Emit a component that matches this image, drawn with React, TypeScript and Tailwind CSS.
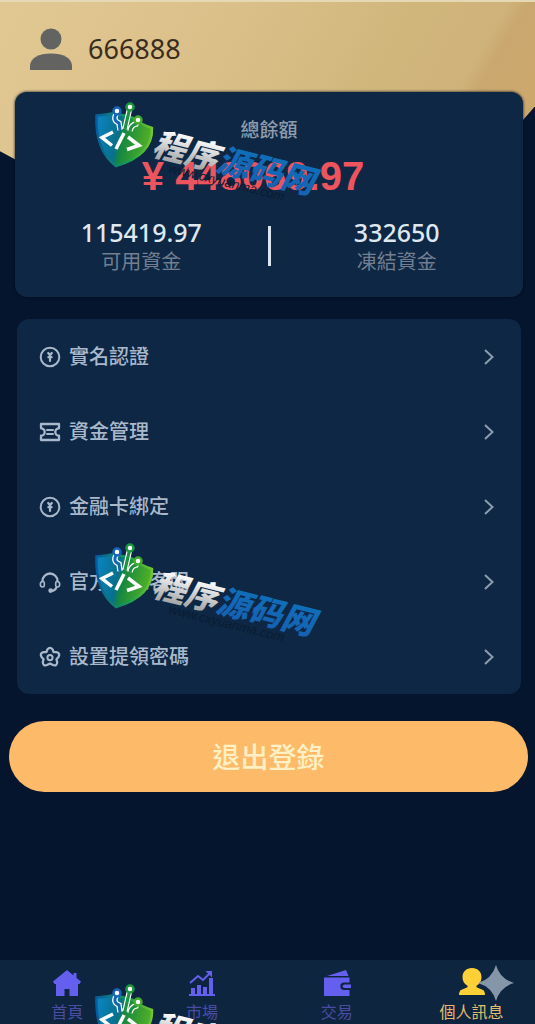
import type { ReactNode } from "react";

type IconProps = { className?: string };

function UserIcon({ className }: IconProps) {
  return (
    <svg viewBox="0 0 42 42" className={className} fill="currentColor" aria-hidden="true">
      <circle cx="21" cy="11" r="10.5" />
      <path d="M0 42v-4c0-8 9-12.5 21-12.5S42 30 42 38v4z" />
    </svg>
  );
}

function Outline({ children }: { children: ReactNode }) {
  return (
    <svg
      viewBox="0 0 22 22"
      className="h-[22px] w-[22px] shrink-0"
      fill="none"
      stroke="currentColor"
      strokeWidth="2"
      strokeLinecap="round"
      strokeLinejoin="round"
      aria-hidden="true"
    >
      {children}
    </svg>
  );
}

function CoinIcon() {
  return (
    <Outline>
      <circle cx="11" cy="11" r="9.3" />
      <path d="M9.2 7l1.8 2.2L12.8 7M11 9.2V15M9.4 11.2h3.200" strokeWidth="2.2" />
    </Outline>
  );
}

function TicketIcon() {
  return (
    <Outline>
      <path d="M2 3h18v4.300a3.700 3.700 0 0 0 0 7.400V19H2v-4.300a3.700 3.700 0 0 0 0-7.400z" strokeWidth="2.3" />
      <path d="M8 9h6M8 13h6" />
    </Outline>
  );
}

function HeadsetIcon() {
  return (
    <Outline>
      <path d="M3.500 10a7.500 7.500 0 0 1 15 0" strokeWidth="2.3" />
      <path
        d="M3.800 10.500c-1.800 0-2.500 1.200-2.500 2.800s.9 2.700 2.500 2.700c1.200 0 1.500-.7 1.500-1.500v-2.600c0-.8-.4-1.400-1.500-1.400zM18.200 10.500c1.800 0 2.500 1.200 2.500 2.800s-.9 2.700-2.500 2.700c-1.200 0-1.500-.7-1.500-1.500v-2.600c0-.8.4-1.400 1.500-1.400z"
        strokeWidth="1.6"
      />
      <path d="M17.500 16.500c-1 2.200-2.800 3.300-5 3.400" />
      <circle cx="11.600" cy="19.600" r="1.300" fill="currentColor" />
    </Outline>
  );
}

function FlowerIcon() {
  return (
    <Outline>
      <path
        d="M8.400 3.400Q11 0.200 13.600 3.400L14.600 6.200 17.600 6.200Q21.600 7.400 19.500 10.900L17.500 13.200 18.200 16.200Q18 20.300 14 19L11 17.400 8 19Q4 20.300 3.800 16.200L4.500 13.200 2.500 10.900Q.4 7.400 4.400 6.200L7.400 6.200z"
        strokeWidth="2.3"
      />
      <circle cx="11" cy="11.600" r="2.600" />
    </Outline>
  );
}

function HomeIcon() {
  return (
    <svg viewBox="0 0 28 26" className="h-[26px] w-7" fill="currentColor" aria-hidden="true">
      <path d="M14 0L0 11.500 1.500 14H3v12h8.500v-7h5v7H25V14h1.500L28 11.500 23.500 8V3h-3v2.500z" />
    </svg>
  );
}

function MarketIcon() {
  return (
    <svg viewBox="0 0 26 26" className="h-[26px] w-[26px]" fill="currentColor" aria-hidden="true">
      <path d="M0 24h26v2H0zM2 18h4v6H2zM8 15h4v9H8zM14 17h4v7h-4zM20 8h4v16h-4z" />
      <path d="M1 13l8-7 5 4 7-7" fill="none" stroke="currentColor" strokeWidth="2" />
      <path d="M16.500 1H23v6.500z" />
    </svg>
  );
}

function WalletIcon() {
  return (
    <svg viewBox="0 0 28 26" className="h-[26px] w-7" fill="currentColor" aria-hidden="true">
      <path d="M4 6L23 0l2.500 6z" />
      <path d="M1 7.500h25.500v5H21a3.700 3.700 0 0 0 0 7.400h5.500V26H1z" />
      <path d="M21.500 14.500H28v3.500h-6.500a1.700 1.700 0 0 1 0-3.500z" />
    </svg>
  );
}

function PersonIcon() {
  return (
    <svg viewBox="0 0 26 28" className="h-7 w-[26px]" fill="currentColor" aria-hidden="true">
      <path d="M13 0c6 0 9.500 4 9.500 9.200 0 4-2 6.800-5 8.600v1.500l6.500 2.800c1 .5 2 2.200 2 4.900H0c0-2.700 1-4.400 2-4.900l6.500-2.800v-1.500c-3-1.800-5-4.600-5-8.600C3.500 4 7 0 13 0z" />
    </svg>
  );
}

function Watermark() {
  return (
    <svg viewBox="0 0 240 110" className="h-[110px] w-60" aria-hidden="true">
      <defs>
        <linearGradient id="shield" x1="0" y1="0" x2="1" y2="0.2">
          <stop offset="0" stopColor="#0b86c4" />
          <stop offset="0.45" stopColor="#08708c" />
          <stop offset="0.55" stopColor="#16883f" />
          <stop offset="1" stopColor="#4fae28" />
        </linearGradient>
        <linearGradient id="rim" x1="0" y1="0" x2="1" y2="0">
          <stop offset="0" stopColor="#075b9f" />
          <stop offset="0.6" stopColor="#1aa04d" />
          <stop offset="1" stopColor="#72c52c" />
        </linearGradient>
        <linearGradient id="silver" x1="0" y1="0" x2="0" y2="1">
          <stop offset="0.2" stopColor="#ffffff" />
          <stop offset="1" stopColor="#8e9093" />
        </linearGradient>
        <linearGradient id="azure" x1="0" y1="0" x2="0" y2="1">
          <stop offset="0.2" stopColor="#0f6fba" />
          <stop offset="1" stopColor="#1a5db0" />
        </linearGradient>
      </defs>
      <path
        d="M6.500 17.500Q16 17 25 15L43 20Q52 27 62 30 63 57 26 68 5 52 6.500 17.500z"
        fill="url(#shield)"
        stroke="url(#rim)"
        strokeWidth="2.5"
      />
      <g fill="none">
        <path d="M27 13l-2 6q-1 4 4 6l1 7M40 9l-5 22M48 22l-2 4q-5 1-6 7" stroke="#ffffff" strokeWidth="5.5" />
        <path d="M27 13l-2 6q-1 4 4 6l1 7" stroke="#1366b4" strokeWidth="3" />
        <path d="M40 9l-5 22M48 22l-2 4q-5 1-6 7" stroke="#1d9141" strokeWidth="3.2" />
      </g>
      <circle cx="27" cy="13" r="3.5" fill="#fff" stroke="#1664bd" strokeWidth="2.500" />
      <circle cx="40" cy="9" r="3.5" fill="#fff" stroke="#1b9740" strokeWidth="2.500" />
      <circle cx="48" cy="22" r="3.5" fill="#fff" stroke="#45aa30" strokeWidth="2.500" />
      <path d="M23 34l-11 5.500 10 8M34 35l-8 16M38 39l11 8.500-12 4" fill="none" stroke="#fff" strokeWidth="3.5" />
      <g transform="rotate(14 63 56)" fontStyle="italic">
        <text x="61" y="57" fontSize="33" fontWeight="900" className="font-['Noto_Sans_CJK_SC',sans-serif]">
          <tspan fill="url(#silver)">程序</tspan>
          <tspan fill="url(#azure)">源码网</tspan>
        </text>
        <text x="82" y="70" fontSize="13" fill="#0a1c33" className="font-['Liberation_Sans',sans-serif]">
          www.cxyuanma.com
        </text>
      </g>
    </svg>
  );
}

const menu = [
  { label: "實名認證", icon: <CoinIcon /> },
  { label: "資金管理", icon: <TicketIcon /> },
  { label: "金融卡綁定", icon: <CoinIcon /> },
  { label: "官方在線客服", icon: <HeadsetIcon /> },
  { label: "設置提領密碼", icon: <FlowerIcon /> },
];

const tabs = [
  { label: "首頁", icon: <HomeIcon />, active: false },
  { label: "市場", icon: <MarketIcon />, active: false },
  { label: "交易", icon: <WalletIcon />, active: false },
  { label: "個人訊息", icon: <PersonIcon />, active: true },
];

function Balance({ amount, label }: { amount: string; label: string }) {
  return (
    <div className="flex-1 text-center">
      <p className="text-[25px] leading-8 font-medium text-[#dfe7f0]">{amount}</p>
      <p className="text-xl leading-7 text-[#737f90]">{label}</p>
    </div>
  );
}

export default function App() {
  return (
    <div className="relative flex min-h-screen flex-col overflow-hidden bg-[#04152d] font-['Noto_Sans','Noto_Sans_CJK_TC',sans-serif]">
      <div className="absolute inset-x-0 top-0 h-[180px] border-t-2 border-[#e5d8b4] bg-[linear-gradient(120deg,#e1c893_0%,#dcc08a_35%,#d1b67c_65%,#cfb279_80%,#c9a76e_83%,#cfa96c_100%)] [clip-path:polygon(0_0,100%_0,100%_59%,88%_100%,10%_100%,0_84%)]" />

      <header className="relative flex h-[92px] items-center gap-4 px-[30px] pt-1.5">
        <UserIcon className="h-[42px] w-[42px] text-[#636462]" />
        <h1 className="text-[27px] leading-8 text-[#3a2d20]">666888</h1>
      </header>

      <main className="relative">
        <section className="mr-3 ml-[15px] h-[205px] rounded-xl bg-[#0d2744] pt-6 shadow-[0_0_3px_#020c1c]">
          <p className="text-center text-[19px] leading-7 font-medium text-[#8e9cac]">總餘額</p>
          <p className="pr-8 text-center font-['Liberation_Sans',sans-serif] text-[40px] leading-[64px] font-bold text-[#ee545d]">
            ¥ 448069.97
          </p>
          <div className="flex items-center pt-2">
            <Balance amount="115419.97" label="可用資金" />
            <span className="h-10 w-[3px] bg-[#dce6f0]" />
            <Balance amount="332650" label="凍結資金" />
          </div>
        </section>

        <ul className="mt-[22px] mr-3.5 ml-[17px] rounded-xl bg-[#0d2744]">
          {menu.map((item) => (
            <li key={item.label}>
              <a href="#" className="flex h-[75px] items-center gap-2 pr-[27px] pl-[22px] text-[#a9b9cb]">
                {item.icon}
                <span className="flex-1 text-xl leading-7 font-medium">{item.label}</span>
                <svg
                  viewBox="0 0 10 16"
                  className="h-4 w-2.5 text-[#8d9db0]"
                  fill="none"
                  stroke="currentColor"
                  strokeWidth="2"
                  aria-hidden="true"
                >
                  <path d="M1 1l7.500 7L1 15" />
                </svg>
              </a>
            </li>
          ))}
        </ul>

        <div className="pt-[27px] pr-[7px] pl-[9px]">
          <button type="button" className="h-[71px] w-full rounded-full bg-[#fdba68] text-[28px] font-medium text-[#fff0c5]">
            退出登錄
          </button>
        </div>
      </main>

      <nav className="relative mt-auto -mr-1 grid h-16 grid-cols-4 bg-[#0e2540]">
        {tabs.map((tab) => (
          <a
            key={tab.label}
            href="#"
            className={
              tab.active
                ? "flex flex-col items-center justify-end text-[#ffd137]"
                : "flex flex-col items-center justify-end text-[#655ff0]"
            }
          >
            {tab.icon}
            <span className={tab.active ? "mt-1 text-base leading-6 text-[#e3bd6c]" : "mt-1 text-base leading-6 text-[#4b4ba4]"}>
              {tab.label}
            </span>
          </a>
        ))}
      </nav>

      <svg viewBox="0 0 36 36" className="absolute right-[21px] bottom-[23px] h-9 w-9" fill="#8596a8" aria-hidden="true">
        <path d="M18 0Q22 14 36 18 22 22 18 36 14 22 0 18 14 14 18 0z" />
      </svg>

      <div className="pointer-events-none absolute top-[98px] left-[90px] flex flex-col gap-[331px]">
        <Watermark />
        <Watermark />
        <Watermark />
      </div>
    </div>
  );
}
